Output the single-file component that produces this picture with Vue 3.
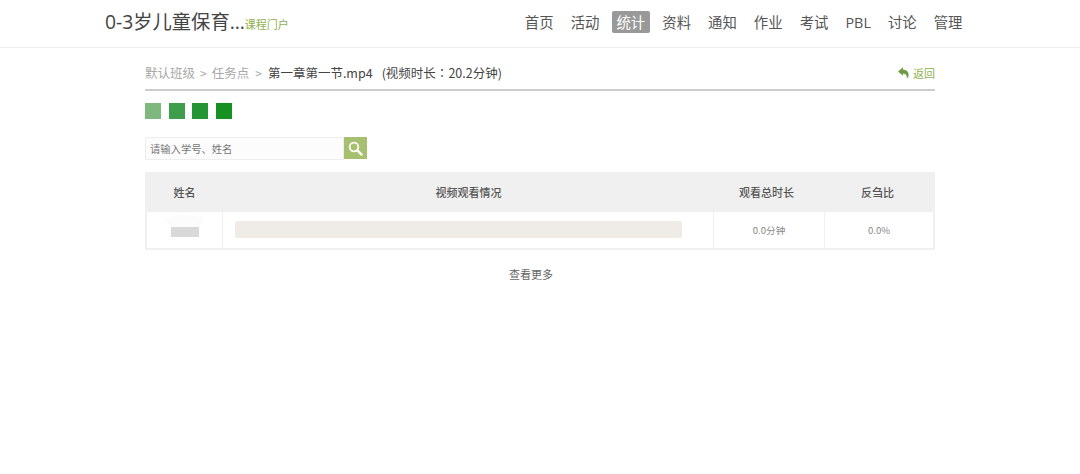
<script setup>
const navItems = ['首页', '活动', '统计', '资料', '通知', '作业', '考试', 'PBL', '讨论', '管理']
const squares = ['#7eb87e', '#3f9e4b', '#259434', '#169022']
</script>

<template>
  <div class="page">
    <header class="topbar">
      <div class="brand">
        <span class="title">0-3岁儿童保育...</span>
        <span class="sub">课程门户</span>
      </div>
      <nav class="nav">
        <a v-for="n in navItems" :key="n" class="nav-item" :class="{ active: n === '统计' }">{{ n }}</a>
      </nav>
    </header>

    <main class="main">
      <div class="crumbs">
        <div class="crumb-text">
          <span class="muted">默认班级</span>
          <span class="sep">&gt;</span>
          <span class="muted">任务点</span>
          <span class="sep sep-2">&gt;</span>
          <span class="current">第一章第一节.mp4<span class="duration">(视频时长<span class="colon">：</span>20.2分钟)</span></span>
        </div>
        <a class="back">
          <svg width="11" height="12" viewBox="0 0 11 12">
            <path d="M0 4.5 L5 0.3 V2.8 C8.6 2.8 10.6 5 10.6 8 C10.6 9.6 9.8 11 8.8 11.7 C9.4 9.4 8.2 6.4 5 6.4 V8.8 Z" fill="#6e9a45" />
          </svg>
          <span>返回</span>
        </a>
      </div>

      <div class="squares">
        <i v-for="c in squares" :key="c" :style="{ background: c }"></i>
      </div>

      <div class="search">
        <div class="search-input">请输入学号、姓名</div>
        <div class="search-btn">
          <svg width="15" height="15" viewBox="0 0 15 15" fill="none" stroke="#fff">
            <circle cx="6" cy="6" r="4.3" stroke-width="1.8" />
            <path d="M9.3 9.3 L13.6 13.6" stroke-width="2.4" stroke-linecap="round" />
          </svg>
        </div>
      </div>

      <div class="table">
        <div class="row head">
          <div class="c1">姓名</div>
          <div class="c2 h2">视频观看情况</div>
          <div class="c3 h3">观看总时长</div>
          <div class="c4 h4">反刍比</div>
        </div>
        <div class="row body">
          <div class="c1 name"><span class="blur-top"></span><span class="blur"></span></div>
          <div class="c2 barcell"><div class="bar"></div></div>
          <div class="c3">0.0分钟</div>
          <div class="c4">0.0%</div>
        </div>
      </div>

      <div class="more">查看更多</div>
    </main>
  </div>
</template>

<style>
html, body { margin: 0; background: #fff; }
</style>

<style scoped>
.page {
  width: 1080px;
  height: 474px;
  overflow: hidden;
  background: #fff;
  font-family: "Noto Sans CJK SC", "Liberation Sans", sans-serif;
  color: #555;
}
.topbar {
  height: 48px;
  box-sizing: border-box;
  border-bottom: 1px solid #eee;
  display: flex;
  justify-content: space-between;
  align-items: center;
  padding: 0 113px 4px 105px;
}
.brand { display: flex; align-items: baseline; margin-bottom: 2px; }
.title { font-size: 19.3px; color: #444; font-family: "Open Sans", "Noto Sans CJK SC", sans-serif; }
.sub { font-size: 11px; color: #8fb04f; }
.nav { display: flex; align-items: center; gap: 8px; }
.nav-item {
  font-family: "Open Sans", "Noto Sans CJK SC", sans-serif;
  font-size: 14.4px;
  line-height: 24px;
  height: 22px;
  padding: 0 4.5px;
  border-radius: 2px;
  color: #555;
}
.nav-item.active { background: #999; color: #fff; }
.main { width: 790px; margin: 0 0 0 145px; }
.crumbs {
  height: 42px;
  border-bottom: 2px solid #ccc;
  box-sizing: border-box;
  display: flex;
  justify-content: space-between;
  align-items: center;
  padding-top: 8px;
  margin-top: 1px;
  font-size: 12.5px;
  line-height: 18px;
}
.crumb-text { display: flex; gap: 5px; align-items: center; }
.muted { color: #a8a8a8; }
.sep { color: #aaa; font-size: 12px; }
.sep-2 { margin-left: 1px; }
.current { color: #444; margin-left: 1px; }
.duration { margin-left: 9px; }
.colon { font-family: "Noto Sans CJK TC", sans-serif; }
.back { display: flex; align-items: center; gap: 4px; font-size: 11px; color: #8fb04f; }
.squares { display: flex; gap: 7.67px; margin-top: 12px; }
.squares i { display: block; width: 16px; height: 16px; }
.search { display: flex; margin-top: 18px; height: 23px; }
.search-input {
  width: 199px;
  height: 23px;
  box-sizing: border-box;
  border: 1px solid #eee;
  background: #fcfcfc;
  padding-left: 4px;
  font-size: 10.3px;
  line-height: 21px;
  color: #777;
}
.search-btn {
  width: 23px;
  height: 22px;
  background: #a7c06f;
  display: flex;
  align-items: center;
  justify-content: center;
}
.table {
  margin-top: 12px;
  background: #f0f0f0;
  padding: 0 2px 2px;
}
.row { display: flex; }
.head {
  height: 40px;
  font-size: 11px;
  font-weight: 500;
  color: #555;
}
.head > div { display: flex; align-items: center; justify-content: center; box-sizing: border-box; }
.h2 { padding-left: 2px; }
.h3 { padding-right: 4px; }
.h4 { padding-right: 2px; }
.body { height: 36px; background: #fff; font-size: 9.6px; color: #888; }
.body > div {
  display: flex;
  align-items: center;
  justify-content: center;
  border-left: 1px solid #f0f0f0;
  box-sizing: border-box;
}
.body > div:first-child { border-left: 0; }
.c1 { width: 75px; }
.c2 { width: 491px; }
.c3 { width: 111px; }
.c4 { width: 109px; }
.body > .name { flex-direction: column; justify-content: flex-start; padding-top: 3px; }
.blur-top {
  display: block;
  width: 42px;
  height: 12px;
  background: #fcfcfc;
  clip-path: polygon(40% 0, 62% 0, 100% 30%, 85% 100%, 15% 100%, 0 30%);
}
.blur { display: block; width: 28px; height: 10px; background: #d9d9d9; }
.body > .barcell { padding: 0 31px 2px 12px; }
.bar { width: 100%; height: 17px; border-radius: 2px; background: #efebe6; }
.more {
  margin-top: 16px;
  padding-right: 18px;
  text-align: center;
  font-size: 11px;
  line-height: 16px;
  color: #666;
}
</style>
